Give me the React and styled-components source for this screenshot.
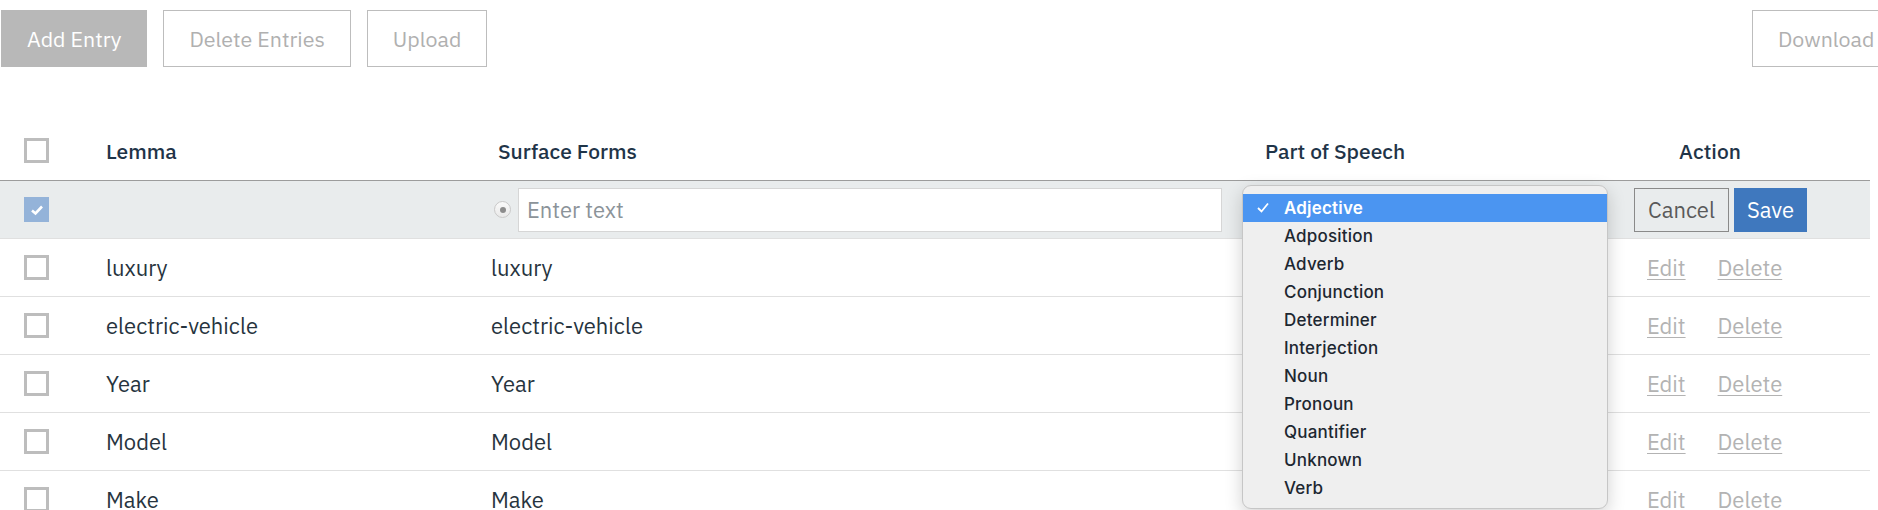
import React from "react";
import styled, { createGlobalStyle } from "styled-components";

const Global = createGlobalStyle`
  html, body { margin: 0; padding: 0; background: #ffffff; overflow: hidden; }
  body { font-family: "IBM Plex Sans", Roboto, "Noto Sans", sans-serif; }
  * { box-sizing: border-box; }
`;

const Page = styled.div`
  width: 1905px;
  padding-top: 10px;
`;

const Toolbar = styled.div`
  display: flex;
  justify-content: space-between;
  align-items: flex-start;
  padding-left: 1px;
`;

const ButtonGroup = styled.div`
  display: flex;
  gap: 16px;
`;

const ToolButton = styled.button`
  height: 57px;
  padding: 0 25px;
  min-width: ${(p) => p.$minWidth || 0}px;
  font-family: inherit;
  font-size: 21.4px;
  text-align: ${(p) => (p.$minWidth ? "left" : "center")};
  border: 1px solid ${(p) => (p.$filled ? "#b8b8b8" : "#bdbdbd")};
  background: ${(p) => (p.$filled ? "#b8b8b8" : "#ffffff")};
  color: ${(p) => (p.$filled ? "#ffffff" : "#b0b0b0")};
  cursor: default;
`;

const Table = styled.div`
  width: 1870px;
  margin-top: 54px;
`;

const Row = styled.div`
  display: grid;
  grid-template-columns: 106px 385px 774px 355px 180px 1fr;
  align-items: center;
  height: ${(p) => (p.$header ? 60 : 58)}px;
  background: ${(p) => (p.$editing ? "#e9eced" : "#ffffff")};
  border-bottom: 1px solid ${(p) => (p.$header ? "#9c9c9c" : "#e0e0e0")};
`;

const Cell = styled.div`
  position: relative;
  display: flex;
  align-items: center;
  align-self: ${(p) => (p.$stretch ? "stretch" : "center")};
  min-width: 0;
  padding-left: ${(p) => p.$pad || 0}px;
  justify-content: ${(p) => (p.$center ? "center" : "flex-start")};
  gap: ${(p) => p.$gap || 0}px;
  font-size: 22px;
  color: #27343e;
  white-space: nowrap;
`;

const HeaderText = styled.span`
  font-size: 21px;
  font-weight: 500;
  color: #1f3448;
  padding-left: ${(p) => p.$pad || 0}px;
`;

const Box = styled.span`
  display: inline-flex;
  align-items: center;
  justify-content: center;
  width: 25px;
  height: 25px;
  border: ${(p) => (p.$checked ? "none" : "3px solid #bdbdbd")};
  background: ${(p) => (p.$checked ? "#94b3d9" : "#ffffff")};
`;

const Radio = styled.span`
  display: inline-flex;
  align-items: center;
  justify-content: center;
  width: 17px;
  height: 17px;
  margin-left: 3px;
  border-radius: 50%;
  border: 1px solid #c9c9c9;
  background: linear-gradient(#fafafa, #e9e9e9);
  &::after {
    content: "";
    width: 6px;
    height: 6px;
    border-radius: 50%;
    background: #8c8c8c;
  }
`;

const TextInput = styled.input`
  width: 704px;
  height: 44px;
  margin-left: 7px;
  padding: 0 8px;
  border: 1px solid #d6d6d6;
  background: #ffffff;
  font-family: inherit;
  font-size: 22px;
  color: #27343e;
  outline: none;
  &::placeholder { color: #8b9399; }
`;

const ActionButton = styled.button`
  height: 44px;
  padding: 0 ${(p) => (p.$primary ? 12 : 13)}px;
  font-family: inherit;
  font-size: 22px;
  border: 1px solid ${(p) => (p.$primary ? "#3f78be" : "#8a8a8a")};
  background: ${(p) => (p.$primary ? "#3f78be" : "transparent")};
  color: ${(p) => (p.$primary ? "#ffffff" : "#5a5a5a")};
  cursor: default;
`;

const LinkText = styled.a`
  font-size: 22px;
  color: #b3b3b3;
  text-decoration: underline;
  text-underline-offset: 3px;
  text-decoration-thickness: 1px;
`;

const Menu = styled.ul`
  position: absolute;
  left: -23px;
  top: 4px;
  z-index: 5;
  width: 366px;
  margin: 0;
  padding: 8px 0 6px;
  list-style: none;
  background: #efefef;
  border: 1px solid #c6c6c6;
  border-radius: 9px;
  box-shadow: 0 6px 18px rgba(0, 0, 0, 0.18);
  font-family: Inter, "Noto Sans", sans-serif;
`;

const MenuItem = styled.li`
  display: flex;
  align-items: center;
  height: 28px;
  padding-left: 41px;
  position: relative;
  font-size: 17px;
  font-weight: ${(p) => (p.$selected ? 600 : 450)};
  letter-spacing: 0.2px;
  color: ${(p) => (p.$selected ? "#ffffff" : "#1d2731")};
  background: ${(p) => (p.$selected ? "#4b95f1" : "transparent")};
`;

const Check = styled.svg`
  position: absolute;
  left: 14px;
  top: 8px;
`;

const POS = [
  "Adjective",
  "Adposition",
  "Adverb",
  "Conjunction",
  "Determiner",
  "Interjection",
  "Noun",
  "Pronoun",
  "Quantifier",
  "Unknown",
  "Verb",
];

const ROWS = ["luxury", "electric-vehicle", "Year", "Model", "Make"];

function CheckBox({ checked }) {
  return (
    <Box $checked={checked}>
      {checked && (
        <svg width="14" height="12" viewBox="0 0 14 12">
          <polyline
            points="2,6.5 5.5,9.5 12,2.5"
            fill="none"
            stroke="#ffffff"
            strokeWidth="2.6"
          />
        </svg>
      )}
    </Box>
  );
}

export default function App() {
  return (
    <>
      <Global />
      <Page>
        <Toolbar>
          <ButtonGroup>
            <ToolButton $filled>Add Entry</ToolButton>
            <ToolButton>Delete Entries</ToolButton>
            <ToolButton>Upload</ToolButton>
          </ButtonGroup>
          <ToolButton $minWidth={153}>Download</ToolButton>
        </Toolbar>

        <Table>
          <Row $header>
            <Cell $pad={24}>
              <CheckBox />
            </Cell>
            <Cell>
              <HeaderText>Lemma</HeaderText>
            </Cell>
            <Cell>
              <HeaderText $pad={7}>Surface Forms</HeaderText>
            </Cell>
            <Cell>
              <HeaderText>Part of Speech</HeaderText>
            </Cell>
            <Cell $center>
              <HeaderText>Action</HeaderText>
            </Cell>
            <Cell />
          </Row>

          <Row $editing>
            <Cell $pad={24}>
              <CheckBox checked />
            </Cell>
            <Cell />
            <Cell>
              <Radio />
              <TextInput placeholder="Enter text" readOnly />
            </Cell>
            <Cell $stretch>
              <Menu>
                {POS.map((p, i) => (
                  <MenuItem key={p} $selected={i === 0}>
                    {i === 0 && (
                      <Check width="12" height="11" viewBox="0 0 12 11">
                        <polyline
                          points="1,6 4.5,9.5 11,1.5"
                          fill="none"
                          stroke="#ffffff"
                          strokeWidth="1.8"
                        />
                      </Check>
                    )}
                    {p}
                  </MenuItem>
                ))}
              </Menu>
            </Cell>
            <Cell $pad={14} $gap={5}>
              <ActionButton>Cancel</ActionButton>
              <ActionButton $primary>Save</ActionButton>
            </Cell>
            <Cell />
          </Row>

          {ROWS.map((r) => (
            <Row key={r}>
              <Cell $pad={24}>
                <CheckBox />
              </Cell>
              <Cell>{r}</Cell>
              <Cell>{r}</Cell>
              <Cell />
              <Cell $pad={27} $gap={32}>
                <LinkText>Edit</LinkText>
                <LinkText>Delete</LinkText>
              </Cell>
              <Cell />
            </Row>
          ))}
        </Table>
      </Page>
    </>
  );
}
